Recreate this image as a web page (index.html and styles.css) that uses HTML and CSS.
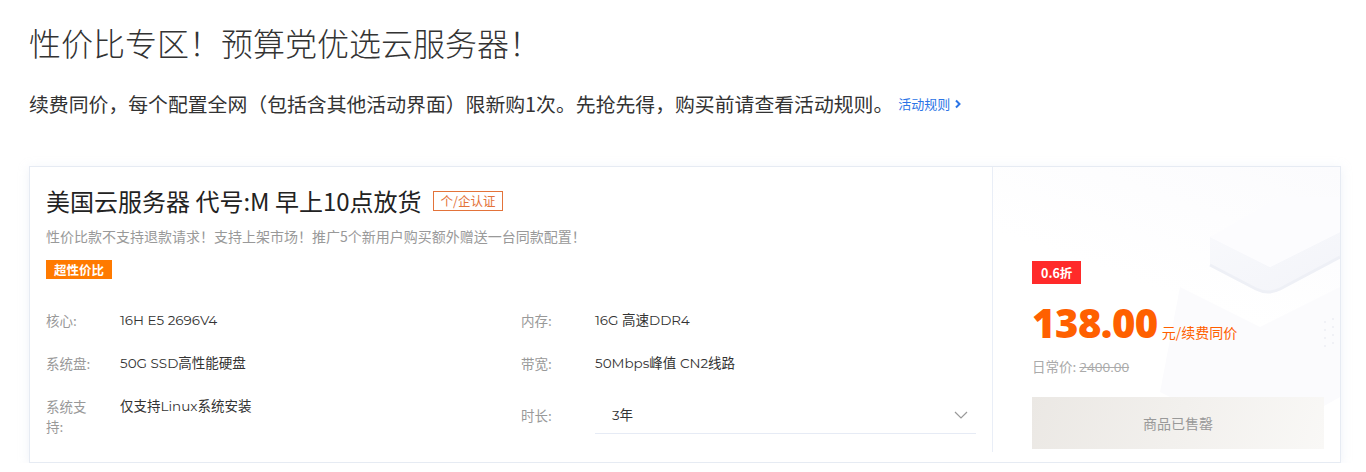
FILE: index.html
```html
<!DOCTYPE html>
<html lang="zh-CN">
<head>
<meta charset="utf-8">
<title>性价比专区</title>
<link rel="stylesheet" href="styles.css">
</head>
<body>
<div class="page">
  <h1 class="page-title">性价比专区！预算党优选云服务器！</h1>
  <p class="page-sub">续费同价，每个配置全网（包括含其他活动界面）限新购1次。先抢先得，购买前请查看活动规则。<a class="rule-link" href="#">活动规则<svg class="rule-chev" width="8" height="10" viewBox="0 0 8 10"><path d="M2 1.5 L5.5 5 L2 8.5" fill="none" stroke="currentColor" stroke-width="2"/></svg></a></p>

  <div class="card">
    <div class="card-main">
      <div class="card-head">
        <h2 class="card-title">美国云服务器 代号:M 早上10点放货</h2>
        <span class="cert-tag">个/企认证</span>
      </div>
      <p class="card-desc">性价比款不支持退款请求！支持上架市场！推广5个新用户购买额外赠送一台同款配置！</p>
      <span class="hot-tag">超性价比</span>
      <div class="specs">
        <div class="spec"><span class="spec-label">核心:</span><span class="spec-value">16H E5 2696V4</span></div>
        <div class="spec"><span class="spec-label">内存:</span><span class="spec-value">16G 高速DDR4</span></div>
        <div class="spec"><span class="spec-label">系统盘:</span><span class="spec-value">50G SSD高性能硬盘</span></div>
        <div class="spec"><span class="spec-label">带宽:</span><span class="spec-value">50Mbps峰值 CN2线路</span></div>
        <div class="spec"><span class="spec-label">系统支持:</span><span class="spec-value">仅支持Linux系统安装</span></div>
        <div class="spec spec-center"><span class="spec-label">时长:</span>
          <div class="select"><span>3年</span><svg width="14" height="8" viewBox="0 0 14 8"><path d="M1 1 L7 7 L13 1" fill="none" stroke="#999" stroke-width="1.2"/></svg></div>
        </div>
      </div>
    </div>
    <div class="card-side">
      <svg class="deco" width="200" height="290" viewBox="0 0 200 290">
        <defs>
          <linearGradient id="g1" x1="0" y1="0" x2="1" y2="1">
            <stop offset="0" stop-color="#f8f9fc"/>
            <stop offset="1" stop-color="#f3f4f9"/>
          </linearGradient>
        </defs>
        <path d="M40 120 L120 160 L200 120 L200 230 L120 275 L20 225 Z" fill="#fbfbfd"/>
        <path d="M70 70 L130 100 L200 65 L200 90 L140 122 Q128 128 116 122 L70 98 Z" fill="url(#g1)"/>
        <path d="M70 70 L140 30 L200 30 L200 65 L130 100 Z" fill="#fcfcfe"/>
        <path d="M70 98 L116 122 Q128 128 140 122 L200 90" fill="none" stroke="#eef0f6" stroke-width="3"/>
        <g fill="#eceef3">
          <circle cx="185" cy="155" r="1"/><circle cx="185" cy="163" r="1"/><circle cx="185" cy="171" r="1"/><circle cx="185" cy="179" r="1"/>
          <circle cx="193" cy="152" r="1"/><circle cx="193" cy="160" r="1"/><circle cx="193" cy="168" r="1"/><circle cx="193" cy="176" r="1"/>
        </g>
      </svg>
      <div class="side-content">
        <span class="discount">0.6折</span>
        <div class="price-line"><span class="price">138.00</span><span class="price-unit">元/续费同价</span></div>
        <div class="orig">日常价: <s>2400.00</s></div>
        <button class="buy-btn" type="button">商品已售罄</button>
      </div>
    </div>
  </div>
</div>
</body>
</html>
```
FILE: styles.css
```css
* { box-sizing: border-box; }
html, body { margin: 0; padding: 0; background: #fff; }
body {
  font-family: "Montserrat", "Open Sans", "Noto Sans CJK SC", sans-serif;
  color: #333;
}
.page { padding: 22px 25px 0 29px; }
.page-title {
  margin: 0;
  font-family: "Noto Sans CJK SC", sans-serif;
  font-size: 32px;
  line-height: 40px;
  font-weight: 300;
  color: #333;
}
.page-sub {
  margin: 27px 0 0;
  font-family: "Noto Sans CJK SC", sans-serif;
  font-size: 19.85px;
  line-height: 30px;
  color: #333;
  display: flex;
  align-items: center;
  white-space: nowrap;
}
.rule-link {
  margin-left: 5px;
  font-size: 13px;
  color: #2b74e6;
  text-decoration: none;
  display: inline-flex;
  align-items: center;
  gap: 4px;
}
.rule-chev { display: block; }

.card {
  margin-top: 47px;
  border: 1px solid #e6ebf3;
  box-shadow: 0 2px 10px rgba(210, 218, 235, 0.35);
  display: flex;
  height: 297px;
  background: #fff;
}
.card-main {
  width: 963px;
  padding: 18px 16px 0 16px;
  margin: 0 0 10px;
  border-right: 1px solid #e9eef7;
}
.card-head { display: flex; align-items: center; }
.card-title {
  margin: 0;
  font-family: "Noto Sans CJK SC", sans-serif;
  font-size: 24px;
  line-height: 32px;
  font-weight: 400;
  color: #222;
}
.cert-tag {
  margin-left: 11px;
  border: 1px solid #e3733a;
  color: #e3733a;
  font-family: "Noto Sans CJK SC", sans-serif;
  font-size: 12.5px;
  line-height: 18px;
  padding: 0 7px;
}
.card-desc {
  margin: 9px 0 0;
  font-family: "Noto Sans CJK SC", sans-serif;
  font-size: 14px;
  line-height: 20px;
  color: #999;
}
.hot-tag {
  display: inline-block;
  margin-top: 14px;
  background: #ff7a00;
  color: #fff;
  font-family: "Noto Sans CJK SC", sans-serif;
  font-size: 12.5px;
  font-weight: 700;
  line-height: 19px;
  padding: 0 8px;
}
.specs {
  margin-top: 31px;
  display: grid;
  grid-template-columns: 455px 455px;
  column-gap: 20px;
  row-gap: 23px;
}
.spec { display: flex; align-items: flex-start; font-size: 13.5px; line-height: 20px; }
.spec-center { align-items: center; margin-top: -2px; }
.spec-label {
  width: 50px;
  margin-right: 24px;
  flex-shrink: 0;
  color: #999;
  font-family: "Noto Sans CJK SC", sans-serif;
  font-size: 13.5px;
}
.spec-value { color: #333; }
.select {
  flex: 1;
  height: 38px;
  border-bottom: 1px solid #e6ebf5;
  display: flex;
  align-items: center;
  justify-content: space-between;
  padding: 0 8px 0 17px;
  color: #333;
}

.card-side {
  flex: 1;
  position: relative;
  overflow: hidden;
  background: linear-gradient(200deg, #fbfbfd 0%, #ffffff 45%);
}
.deco { position: absolute; right: 0; top: 0; }
.side-content {
  position: relative;
  height: 100%;
  padding: 94px 16px 12px 39px;
  display: flex;
  flex-direction: column;
  align-items: flex-start;
}
.discount {
  background: #ff2a2a;
  color: #fff;
  font-size: 12.5px;
  font-weight: 700;
  line-height: 23px;
  padding: 0 9px;
  font-family: "Noto Sans CJK SC", sans-serif;
}
.price-line { display: flex; align-items: baseline; margin-top: 14px; height: 50px; }
.price {
  font-size: 40px;
  font-weight: 800;
  color: #ff6000;
  line-height: 50px;
  font-family: "Open Sans", sans-serif;
  letter-spacing: -0.5px;
}
.price-unit {
  margin-left: 4px;
  color: #ff6000;
  font-family: "Noto Sans CJK SC", sans-serif;
  font-size: 14px;
}
.orig {
  margin-top: 8px;
  font-size: 13.5px;
  line-height: 20px;
  color: #aaa;
  font-family: "Noto Sans CJK SC", sans-serif;
}
.orig s { font-family: "Open Sans", sans-serif; }
.buy-btn {
  margin-top: 20px;
  width: 100%;
  height: 52px;
  border: 0;
  background: linear-gradient(110deg, #ebe8e4 0%, #f9f8f6 100%);
  color: #999;
  font-family: "Noto Sans CJK SC", sans-serif;
  font-size: 14px;
}
```
